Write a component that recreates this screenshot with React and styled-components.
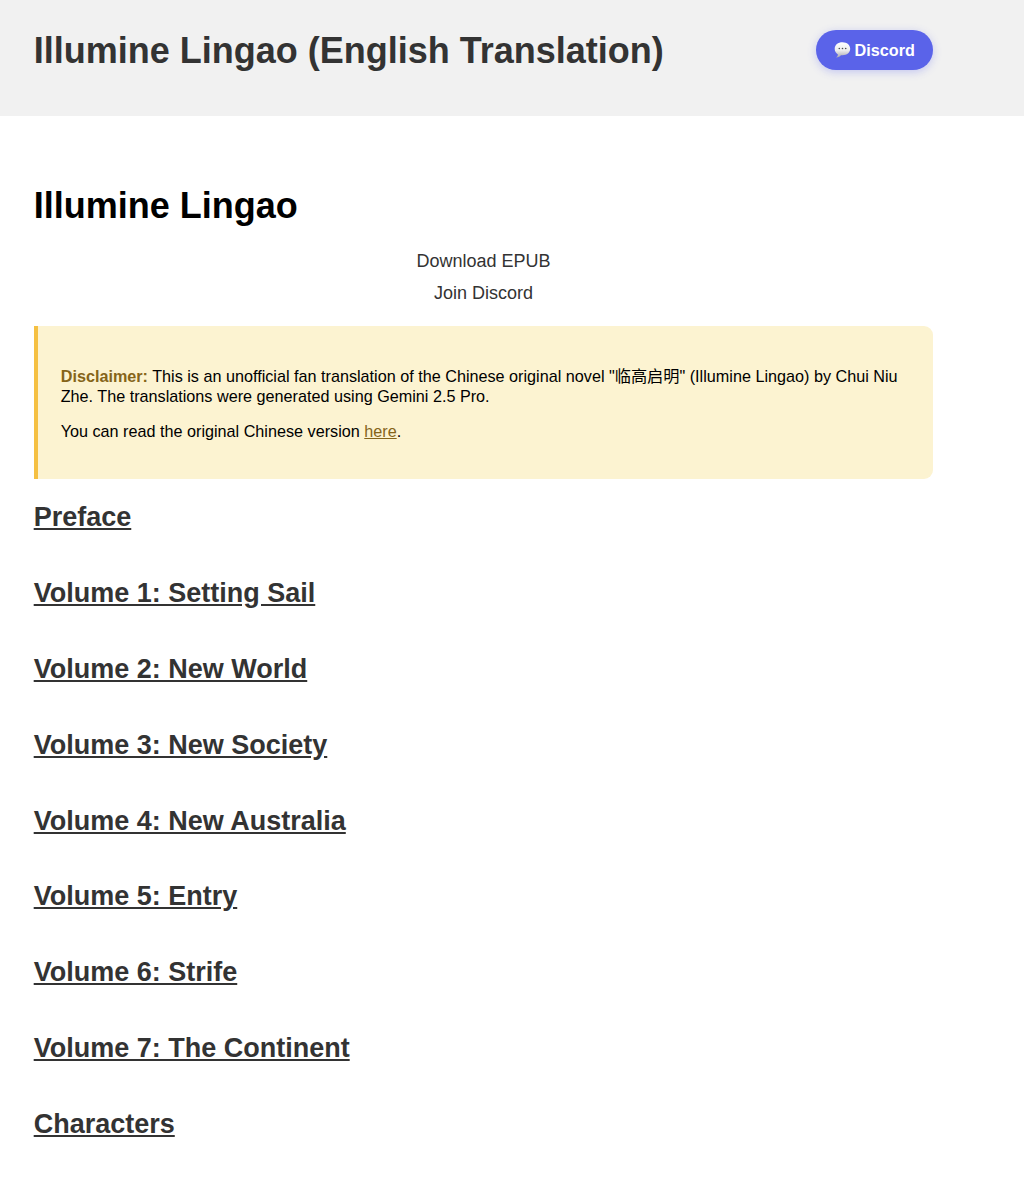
import React from "react";
import styled, { createGlobalStyle } from "styled-components";

const GlobalStyle = createGlobalStyle`
  body {
    margin: 0;
    background: #fff;
    color: #000;
    font-family: "Liberation Sans", "Noto Sans CJK SC", sans-serif;
    font-size: 18px;
  }
`;

// grey band across the top
const Header = styled.header`
  box-sizing: border-box;
  height: 115.6px;
  padding: 30px 91px 0 33.7px;
  background: #f1f1f1;
  display: flex;
  justify-content: space-between;
  align-items: flex-start;
`;

const SiteTitle = styled.h1`
  margin: 0;
  font-size: 36px;
  line-height: 41px;
  color: #333;
`;

const DiscordButton = styled.a`
  box-sizing: border-box;
  display: flex;
  align-items: center;
  gap: 3.6px;
  width: 117px;
  height: 39.5px;
  padding: 1px 0 0 18px;
  border-radius: 28px;
  background: #5a63e9;
  color: #fff;
  font-size: 16.2px;
  font-weight: bold;
  text-decoration: none;
  box-shadow: 0 2px 9px rgba(88, 101, 242, 0.3);
`;

const Main = styled.main`
  width: 899.5px;
  padding: 69px 0 0 33.7px;
`;

const PageTitle = styled.h1`
  margin: 0 0 19px;
  font-size: 36px;
  line-height: 41px;
`;

const LinkList = styled.div`
  display: flex;
  flex-direction: column;
  align-items: center;
`;

const TextLink = styled.a`
  line-height: 32px;
  color: #333;
  text-decoration: none;
`;

// disclaimer box
const Notice = styled.section`
  box-sizing: border-box;
  height: 153px;
  margin-top: 17px;
  padding: 40.2px 22.5px 0 23px;
  border-left: 4.5px solid #f5c042;
  border-radius: 0 9px 9px 0;
  background: #fcf3d1;
  font-size: 16.2px;
  line-height: 20.2px;
`;

const Paragraph = styled.p`
  margin: 0 0 14.4px;
`;

const Label = styled.strong`
  color: #856419;
`;

const NoticeLink = styled.a`
  color: #856419;
  text-decoration: underline;
`;

const Volumes = styled.nav`
  display: flex;
  flex-direction: column;
  align-items: flex-start;
  gap: 44.9px;
  margin-top: 23.4px;
`;

const VolumeTitle = styled.h2`
  margin: 0;
  font-size: 27px;
  line-height: 31px;
`;

const VolumeLink = styled.a`
  color: #333;
  text-decoration: underline;
`;

const volumes = [
  "Preface",
  "Volume 1: Setting Sail",
  "Volume 2: New World",
  "Volume 3: New Society",
  "Volume 4: New Australia",
  "Volume 5: Entry",
  "Volume 6: Strife",
  "Volume 7: The Continent",
  "Characters",
];

// speech bubble with three dots
const Bubble = () => (
  <svg width="17" height="17" viewBox="0 0 17 17">
    <defs>
      <linearGradient id="bubble" x1="0" y1="0" x2="0" y2="1">
        <stop offset="0" stopColor="#fff" />
        <stop offset="0.55" stopColor="#ececec" />
        <stop offset="1" stopColor="#a9a9b0" />
      </linearGradient>
    </defs>
    <path
      d="M8.5 0.3C4 0.3 0.7 3 0.7 6.800c0 2.500 1.200 4.500 3.200 5.600 0 1.400-.9 2.400-1.900 3 2 .2 3.800-.7 4.900-2.200.5.1 1 .1 1.600.1 4.400 0 7.700-2.800 7.700-6.500S13 0.300 8.500 0.300Z"
      fill="url(#bubble)"
    />
    <circle cx="5.3" cy="6.5" r="0.8" fill="#4d4d50" />
    <circle cx="8.5" cy="6.5" r="0.8" fill="#4d4d50" />
    <circle cx="11.7" cy="6.5" r="0.8" fill="#4d4d50" />
  </svg>
);

export default function App() {
  return (
    <>
      <GlobalStyle />
      <Header>
        <SiteTitle>Illumine Lingao (English Translation)</SiteTitle>
        <DiscordButton href="#">
          <Bubble />
          Discord
        </DiscordButton>
      </Header>
      <Main>
        <PageTitle>Illumine Lingao</PageTitle>
        <LinkList>
          <TextLink href="#">Download EPUB</TextLink>
          <TextLink href="#">Join Discord</TextLink>
        </LinkList>
        <Notice>
          <Paragraph>
            <Label>Disclaimer:</Label> This is an unofficial fan translation of
            the Chinese original novel "临高启明" (Illumine Lingao) by Chui Niu
            Zhe. The translations were generated using Gemini 2.5 Pro.
          </Paragraph>
          <Paragraph>
            You can read the original Chinese version{" "}
            <NoticeLink href="#">here</NoticeLink>.
          </Paragraph>
        </Notice>
        <Volumes>
          {volumes.map((title) => (
            <VolumeTitle key={title}>
              <VolumeLink href="#">{title}</VolumeLink>
            </VolumeTitle>
          ))}
        </Volumes>
      </Main>
    </>
  );
}
